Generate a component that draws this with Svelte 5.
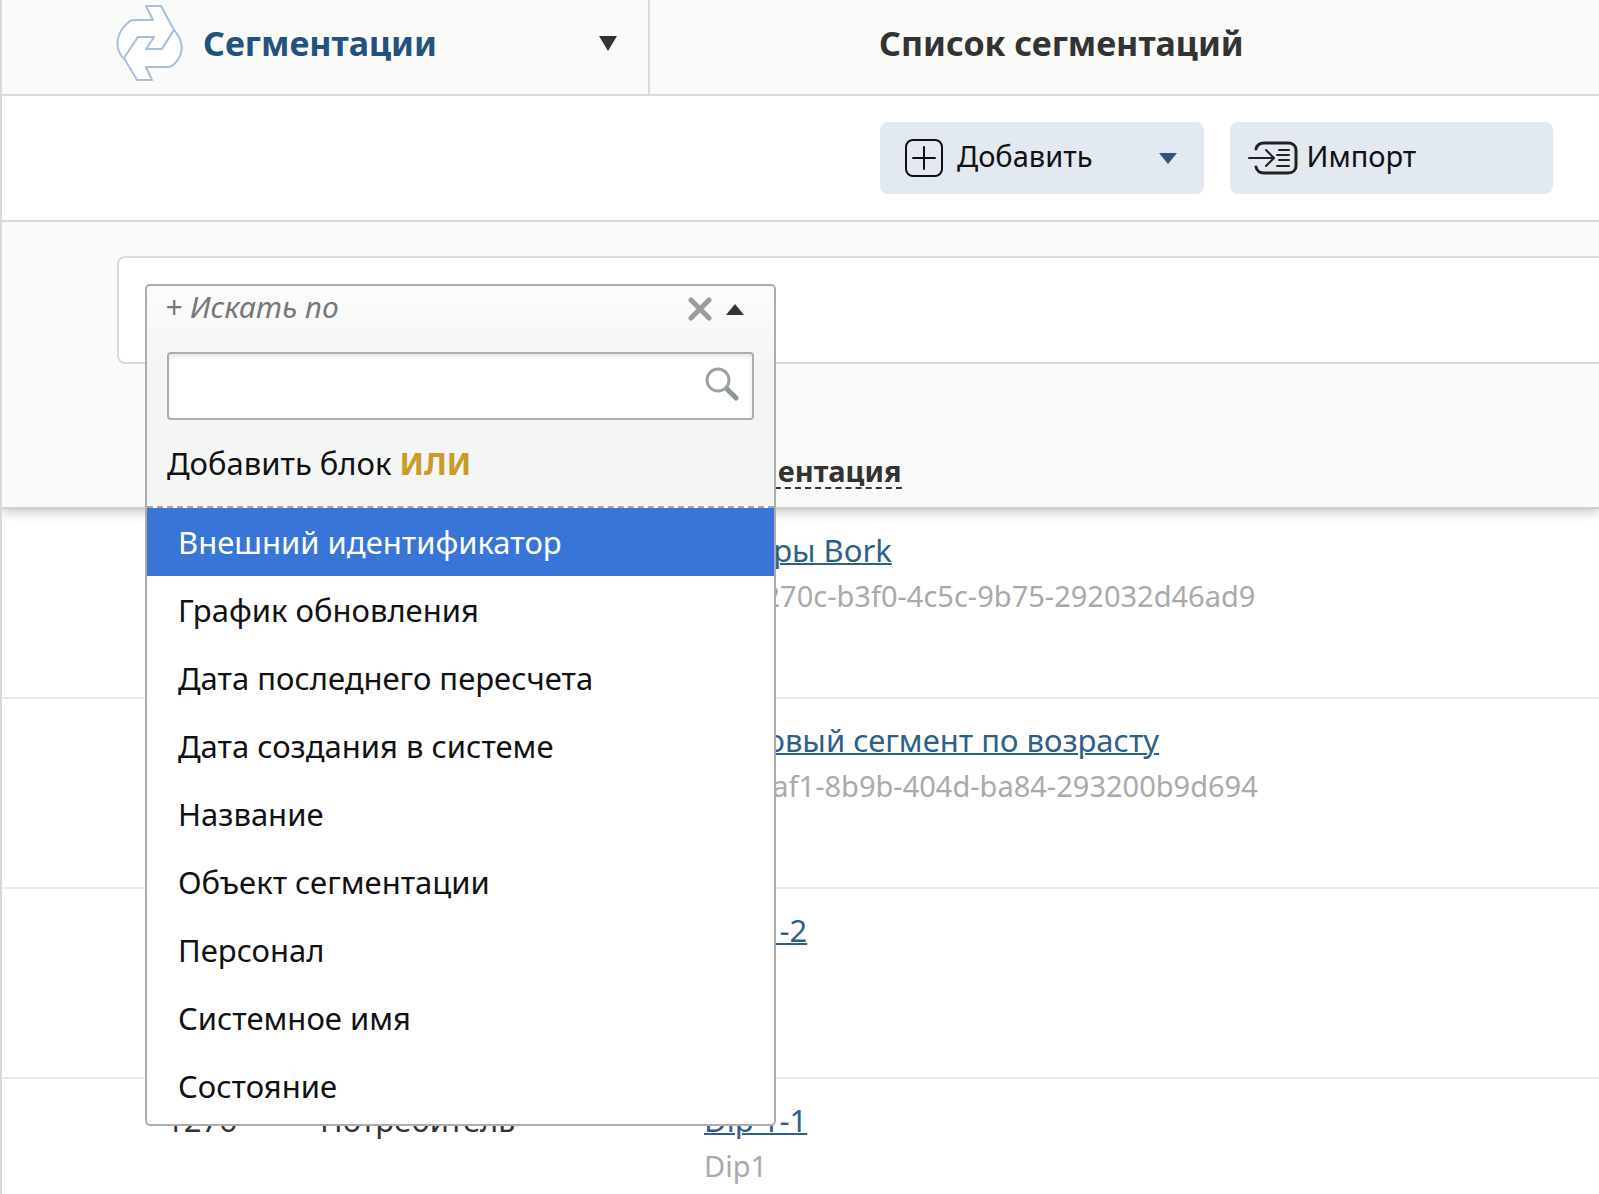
<script>
  const fields = [
    'Внешний идентификатор',
    'График обновления',
    'Дата последнего пересчета',
    'Дата создания в системе',
    'Название',
    'Объект сегментации',
    'Персонал',
    'Системное имя',
    'Состояние'
  ]

  const rows = [
    { id: 1279, object: 'Потребитель', name: 'Товары Bork', code: 'e41f270c-b3f0-4c5c-9b75-292032d46ad9' },
    { id: 1278, object: 'Потребитель', name: 'Тестовый сегмент по возрасту', code: 'fc2fbaf1-8b9b-404d-ba84-293200b9d694' },
    { id: 1277, object: 'Потребитель', name: 'Dip 1-2', code: '' },
    { id: 1276, object: 'Потребитель', name: 'Dip 1-1', code: 'Dip1' }
  ]

  let open = $state(true)
  let query = $state('')
  let active = $state(fields[0])

  let found = $derived(fields.filter((f) => f.toLowerCase().includes(query.toLowerCase())))
</script>

<div class="page">
  <header class="header">
    <button class="brand" type="button">
      <svg class="brand__logo" viewBox="0 0 68 78" width="68" height="78" aria-hidden="true">
        <g fill="#fff" stroke="#a9c0dc" stroke-width="2" stroke-linejoin="round">
          <path d="M31 2h15l13 24-12 19H31l8-12H23L9 55C-3 42 3 26 15 17q2-1 5-1h18z" />
          <path d="M37 76H22L9 54l14-21h16l-8 12h16l12-19c12 14 9 27-2 36q-2 1-5 1H31z" />
        </g>
      </svg>
      <span class="brand__name">Сегментации</span>
      <svg class="brand__arrow" viewBox="0 0 18 15" width="18" height="15" aria-hidden="true">
        <path d="M0 0h18l-9 15z" fill="#333" />
      </svg>
    </button>
    <h1 class="header__title">Список сегментаций</h1>
  </header>

  <div class="toolbar">
    <button class="tool" type="button">
      <svg viewBox="0 0 40 40" width="40" height="40" fill="none" stroke="#111" stroke-width="2" aria-hidden="true">
        <rect x="2" y="2" width="36" height="36" rx="7" />
        <path d="M20 9v22M9 20h22" stroke-linecap="round" />
      </svg>
      <span>Добавить</span>
      <svg class="tool__arrow" viewBox="0 0 18 11" width="18" height="11" aria-hidden="true">
        <path d="M0 0h18l-9 11z" fill="#2d5783" />
      </svg>
    </button>
    <button class="tool tool--import" type="button">
      <svg viewBox="0 0 50 36" width="50" height="36" fill="none" stroke="#222" stroke-width="2" stroke-linecap="round" aria-hidden="true">
        <path d="M8 9c1-4 3-6 8-6h24c5 0 8 3 8 7v16c0 4-3 7-8 7H16c-5 0-7-2-8-6" stroke-width="3" />
        <path d="M1 18h24M18 10l8 8-8 8M31 10h10M29 15h12M31 20h10M29 26h12" />
      </svg>
      <span>Импорт</span>
    </button>
  </div>

  <section class="filter">
    <div class="filter__box">
      <div class="picker">
        <div class="picker__top">
          <div class="picker__head">
            <button class="picker__label" type="button" onclick={() => (open = !open)}>+ Искать по</button>
            <button class="picker__icon" type="button" aria-label="Очистить" onclick={() => (query = '')}>
              <svg viewBox="0 0 24 24" width="24" height="24" aria-hidden="true">
                <path d="M3 3l18 18M21 3L3 21" stroke="#9b9b9b" stroke-width="5" stroke-linecap="round" />
              </svg>
            </button>
            <button class="picker__icon" type="button" aria-label="Свернуть" onclick={() => (open = !open)}>
              <svg viewBox="0 0 18 11" width="18" height="11" aria-hidden="true">
                <path d="M0 11h18L9 0z" fill="#333" />
              </svg>
            </button>
          </div>
          {#if open}
            <label class="search">
              <input class="search__input" type="text" aria-label="Поиск по полям" bind:value={query} />
              <svg viewBox="0 0 34 34" width="34" height="34" fill="none" aria-hidden="true">
                <path d="M22 22l9 9" stroke="#8f9696" stroke-width="5" stroke-linecap="round" />
                <circle cx="13" cy="13" r="11" stroke="#9aa2a2" stroke-width="3" />
              </svg>
            </label>
            <button class="picker__or" type="button">Добавить блок <b>ИЛИ</b></button>
          {/if}
        </div>
        {#if open}
          <ul class="options">
            {#each found as field}
              <li>
                <button
                  class="option"
                  class:option--active={field === active}
                  type="button"
                  onmouseenter={() => (active = field)}
                >
                  {field}
                </button>
              </li>
            {/each}
          </ul>
        {/if}
      </div>
    </div>
  </section>

  <table class="table">
    <colgroup>
      <col class="col-id" />
      <col class="col-object" />
      <col />
    </colgroup>
    <thead>
      <tr>
        <th></th>
        <th></th>
        <th><button class="sort" type="button">Сегментация</button></th>
      </tr>
    </thead>
    <tbody>
      {#each rows as row}
        <tr>
          <td>{row.id}</td>
          <td>{row.object}</td>
          <td>
            <a class="link" href="#{row.id}">{row.name}</a>
            <div class="code">{row.code}</div>
          </td>
        </tr>
      {/each}
    </tbody>
  </table>
</div>

<style>
  :global(body) {
    margin: 0;
    background: #fff;
  }

  .page {
    box-sizing: border-box;
    min-height: 100vh;
    overflow: hidden;
    border-left: 2px solid #d9d9d9;
    font-family: 'Noto Sans', 'Open Sans', sans-serif;
    font-size: 31px;
    line-height: 46px;
    color: #333;
  }

  button {
    padding: 0;
    border: none;
    background: none;
    font: inherit;
    color: inherit;
    text-align: left;
    cursor: pointer;
  }

  svg {
    flex-shrink: 0;
  }

  .header {
    display: flex;
    height: 94px;
    border-bottom: 2px solid #dadada;
    background: #fafaf8;
  }

  .brand {
    display: flex;
    align-items: center;
    box-sizing: border-box;
    width: 648px;
    padding: 0 31px 8px 113px;
    border-right: 2px solid #dadada;
    font-size: 34px;
    font-weight: 700;
    color: #24527f;
  }

  .brand__logo {
    margin-right: 20px;
  }

  .brand__arrow {
    margin-left: auto;
  }

  .header__title {
    margin: 0;
    padding: 20px 0 0 229px;
    font-size: 34px;
    line-height: 46px;
    font-weight: 700;
    white-space: nowrap;
  }

  .toolbar {
    display: grid;
    grid-template-columns: 1fr 1fr;
    gap: 26px;
    padding: 26px 46px 26px 878px;
    border-bottom: 2px solid #dadada;
  }

  .tool {
    display: flex;
    align-items: center;
    gap: 13px;
    height: 72px;
    padding: 0 27px 4px 24px;
    border-radius: 8px;
    background: #e2e9f0;
    font-size: 29px;
    color: #111;
  }

  .tool--import {
    gap: 9px;
    padding-left: 18px;
  }

  .tool svg {
    margin-top: 4px;
  }

  .tool .tool__arrow {
    margin-left: auto;
  }

  .filter {
    position: relative;
    z-index: 1;
    padding: 34px 0 0 115px;
    background: #fafaf8;
  }

  .filter__box {
    position: relative;
    box-sizing: border-box;
    height: 108px;
    border: 2px solid #dadada;
    border-right: none;
    border-radius: 8px 0 0 8px;
    background: #fff;
  }

  .picker {
    position: absolute;
    top: 26px;
    left: 26px;
    box-sizing: border-box;
    width: 631px;
    border: 2px solid #acaeae;
    border-radius: 5px;
    background: #fff;
    color: #111;
  }

  .picker__top {
    border-bottom: 2px dashed #a5a5a5;
    border-radius: 4px 4px 0 0;
    background: linear-gradient(#fcfcfc, #f4f5f5 80px);
  }

  .picker__head {
    display: flex;
    align-items: center;
    gap: 14px;
    padding: 0 30px 0 18px;
  }

  .picker__label {
    flex: 1;
    padding-bottom: 4px;
    font-size: 30px;
    line-height: 42px;
    font-style: italic;
    color: #777;
  }

  .picker__icon {
    display: flex;
  }

  .search {
    display: flex;
    align-items: flex-start;
    box-sizing: border-box;
    height: 68px;
    margin: 20px 20px 0;
    padding: 13px 13px 0 12px;
    border: 2px solid #acaeae;
    border-radius: 4px;
    background: #fff;
    box-shadow: inset 0 3px 4px #e8e8e8;
  }

  .search__input {
    flex: 1;
    min-width: 0;
    padding: 0;
    border: none;
    outline: none;
    background: none;
    font: inherit;
  }

  .picker__or {
    display: block;
    padding: 20px;
  }

  .picker__or b {
    color: #cb9a27;
  }

  .options {
    margin: 0;
    padding: 0 0 4px;
    list-style: none;
  }

  .option {
    display: block;
    width: 100%;
    padding-left: 31px;
    line-height: 68px;
  }

  .option--active {
    background: #3875d7;
    color: #fff;
  }

  .table {
    width: 100%;
    border-collapse: collapse;
    table-layout: fixed;
  }

  .col-id {
    width: 318px;
  }

  .col-object {
    width: 384px;
  }

  th {
    height: 125px;
    padding: 0 0 18px;
    background: #fafaf8;
    font-size: 29px;
    line-height: 36px;
    text-align: left;
    vertical-align: bottom;
  }

  thead tr {
    border-bottom: 2px solid #d0d0d0;
    box-shadow: 0 4px 10px #c4c4c4;
  }

  th:first-child,
  td:first-child {
    padding-left: 164px;
  }

  .sort {
    border-bottom: 2px dashed #333;
    line-height: 32px;
  }

  td {
    height: 170px;
    padding: 18px 0 0;
    vertical-align: top;
  }

  tbody tr {
    border-bottom: 2px solid #ebebeb;
  }

  .link {
    color: #2d5f8b;
    text-decoration-thickness: 2px;
  }

  .code {
    font-size: 29px;
    color: #aaa;
  }
</style>
